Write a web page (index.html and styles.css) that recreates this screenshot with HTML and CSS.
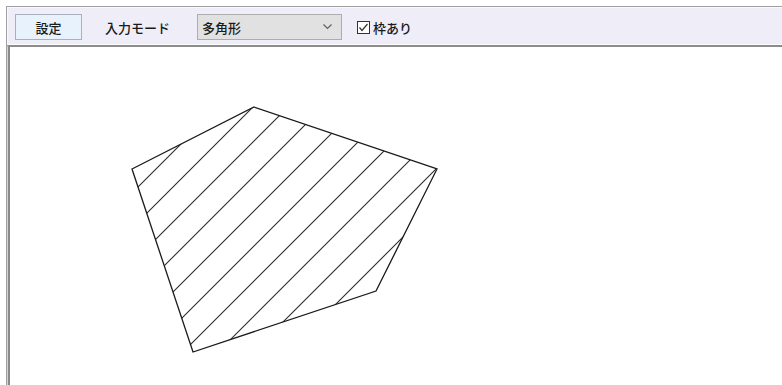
FILE: index.html
```html
<!DOCTYPE html>
<html lang="ja">
<head>
    <meta charset="UTF-8">
    <title>多角形</title>
    <link rel="stylesheet" href="styles.css">
</head>
<body>

<div class="window">
    <div class="toolbar">
        <button class="btn">設定</button>
        <span class="label">入力モード</span>
        <div class="select">
            <span>多角形</span>
            <svg class="chevron" width="9" height="6" viewBox="0 0 9 6">
                <polyline points="0.5,0.5 4.5,4.5 8.5,0.5" fill="none" stroke="#606060" stroke-width="1.2"/>
            </svg>
        </div>
        <label class="check">
            <svg width="13" height="13" viewBox="0 0 13 13">
                <rect x="0.5" y="0.5" width="12" height="12" fill="#fff" stroke="#333"/>
                <polyline points="2.5,6.5 5,9.5 10.5,3" fill="none" stroke="#333" stroke-width="1.2"/>
            </svg>
            <span>枠あり</span>
        </label>
    </div>

    <div class="canvas">
        <!-- viewBox uses page coordinates so the points read like the screen -->
        <svg class="drawing" width="772" height="338" viewBox="10 47 772 338">
            <defs>
                <clipPath id="shape">
                    <polygon points="254,107 437,169 376,291 193,352 132,169"/>
                </clipPath>
            </defs>
            <g clip-path="url(#shape)" stroke="#2a2a2a" stroke-width="1.1">
                <line x1="-75" y1="400" x2="325" y2="0"/>
                <line x1="-40" y1="400" x2="360" y2="0"/>
                <line x1="-5" y1="400" x2="395" y2="0"/>
                <line x1="30" y1="400" x2="430" y2="0"/>
                <line x1="65" y1="400" x2="465" y2="0"/>
                <line x1="100" y1="400" x2="500" y2="0"/>
                <line x1="135" y1="400" x2="535" y2="0"/>
                <line x1="170" y1="400" x2="570" y2="0"/>
                <line x1="205" y1="400" x2="605" y2="0"/>
                <line x1="240" y1="400" x2="640" y2="0"/>
            </g>
            <polygon points="254,107 437,169 376,291 193,352 132,169" fill="none" stroke="#1a1a1a" stroke-width="1.3"/>
        </svg>
    </div>
</div>

</body>
</html>
```

FILE: styles.css
```css
body {
    margin: 0;
    background-color: #fff;
    font-family: "Noto Sans CJK JP", sans-serif;
    font-size: 13px;
    font-weight: 500;
    color: #1a1a1a;
    overflow: hidden;
}
.window {
    margin: 6px 0 0 6px;
    border-top: 1px solid #a0a0a0;
    border-left: 1px solid #a0a0a0;
}
.toolbar {
    display: flex;
    align-items: center;
    height: 26px;
    padding: 6px 7px 4px 7px;
    background-color: #eeedf8;
    border-top: 1px solid #fafafa;
    border-left: 1px solid #fafafa;
    border-bottom: 1px solid #fdfdfd;
}
.btn {
    width: 67px;
    height: 26px;
    padding: 0;
    font: inherit;
    color: inherit;
    background-color: #e8f2fc;
    border: 1px solid #a9b0bd;
}
.label {
    margin-left: 23px;
}
.select {
    display: flex;
    align-items: center;
    justify-content: space-between;
    box-sizing: border-box;
    width: 145px;
    height: 26px;
    margin-left: 27px;
    padding: 0 9px 0 4px;
    background-color: #e1e1e1;
    border: 1px solid #adadad;
}
.chevron {
    display: block;
}
.check {
    display: flex;
    align-items: center;
    gap: 3px;
    margin-left: 15px;
}
.check svg {
    display: block;
}
.canvas {
    border-top: 2px solid #8c8c8c;
    border-left: 1px solid #d4d4d4;
}
.drawing {
    display: block;
    border-left: 2px solid #8a8a8a;
}
```
